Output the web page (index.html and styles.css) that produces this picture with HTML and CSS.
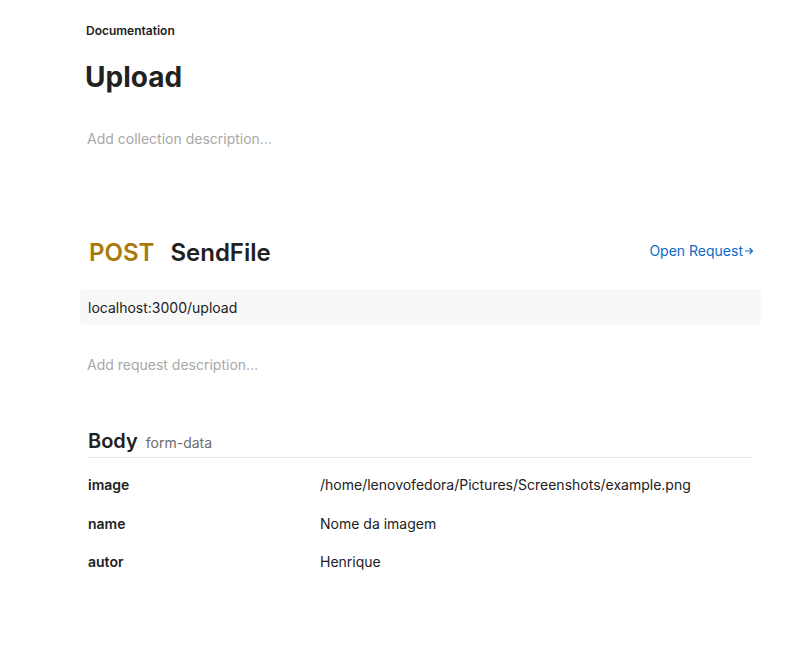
FILE: index.html
```html
<!DOCTYPE html>
<html>
<head>
<meta charset="utf-8">
<link rel="stylesheet" href="styles.css">
</head>
<body>
<main class="page">
  <section class="collection">
    <div class="crumb">Documentation</div>
    <h1 class="title">Upload</h1>
    <div class="placeholder coll-desc">Add collection description…</div>
  </section>

  <section class="request">
    <div class="req-head">
      <div class="req-name"><span class="method">POST</span><span class="name">SendFile</span></div>
      <a class="open-link" href="#">Open Request<svg class="arrow" width="10" height="10" viewBox="0 0 10 10"><path d="M1 5h7.5M5.5 2l3 3-3 3" fill="none" stroke="currentColor" stroke-width="1.2"/></svg></a>
    </div>
    <div class="url">localhost:3000/upload</div>
    <div class="placeholder req-desc">Add request description…</div>

    <div class="body-sec">
      <div class="body-head"><span class="body-title">Body</span><span class="body-type">form-data</span></div>
      <div class="kv">
        <div class="k">image</div><div class="v">/home/lenovofedora/Pictures/Screenshots/example.png</div>
        <div class="k">name</div><div class="v">Nome da imagem</div>
        <div class="k">autor</div><div class="v">Henrique</div>
      </div>
    </div>
  </section>
</main>
</body>
</html>
```
FILE: styles.css
```css
html, body { margin: 0; padding: 0; background: #fff; }
body { font-family: Inter, "Noto Sans", sans-serif; color: #212121; }
.page { margin-left: 80px; width: 681px; padding-top: 23px; }
.collection { padding-left: 6px; }
.crumb { font-size: 12px; line-height: 16px; font-weight: 600; color: #212121; }
.title { margin: 20px 0 0 -1px; font-size: 28px; line-height: 36px; font-weight: 700; color: #212121; }
.placeholder { font-size: 14px; line-height: 20px; color: #a8a8a8; }
.coll-desc { margin-top: 34px; padding-left: 1px; }
.request { margin-top: 87px; }
.req-head { display: flex; align-items: center; justify-content: space-between; padding: 0 7px 0 9px; height: 32px; }
.req-name { display: flex; align-items: baseline; gap: 16px; font-size: 24px; font-weight: 600; }
.method { color: #a97a0b; }
.name { color: #212121; }
.open-link { color: #0b6bcb; font-size: 14px; text-decoration: none; display: flex; align-items: center; gap: 1px; margin-top: -3px; }
.arrow { display: block; }
.url { margin-top: 21px; background: #f8f8f8; border-radius: 4px; height: 36px; padding: 0 8px; display: flex; align-items: center; font-size: 14px; color: #212121; }
.req-desc { margin-top: 30px; padding-left: 7px; }
.body-sec { margin: 54px 8px 0 8px; }
.body-head { display: flex; align-items: baseline; gap: 8px; padding-bottom: 4px; border-bottom: 1px solid #e8e8e8; }
.body-title { font-size: 20px; line-height: 24px; font-weight: 600; color: #212121; }
.body-type { font-size: 14px; color: #6b6b6b; }
.kv { display: grid; grid-template-columns: 232px 1fr; row-gap: 18.5px; padding-top: 17px; font-size: 14px; line-height: 20px; }
.k { font-weight: 600; color: #212121; }
.v { color: #212121; }
```
